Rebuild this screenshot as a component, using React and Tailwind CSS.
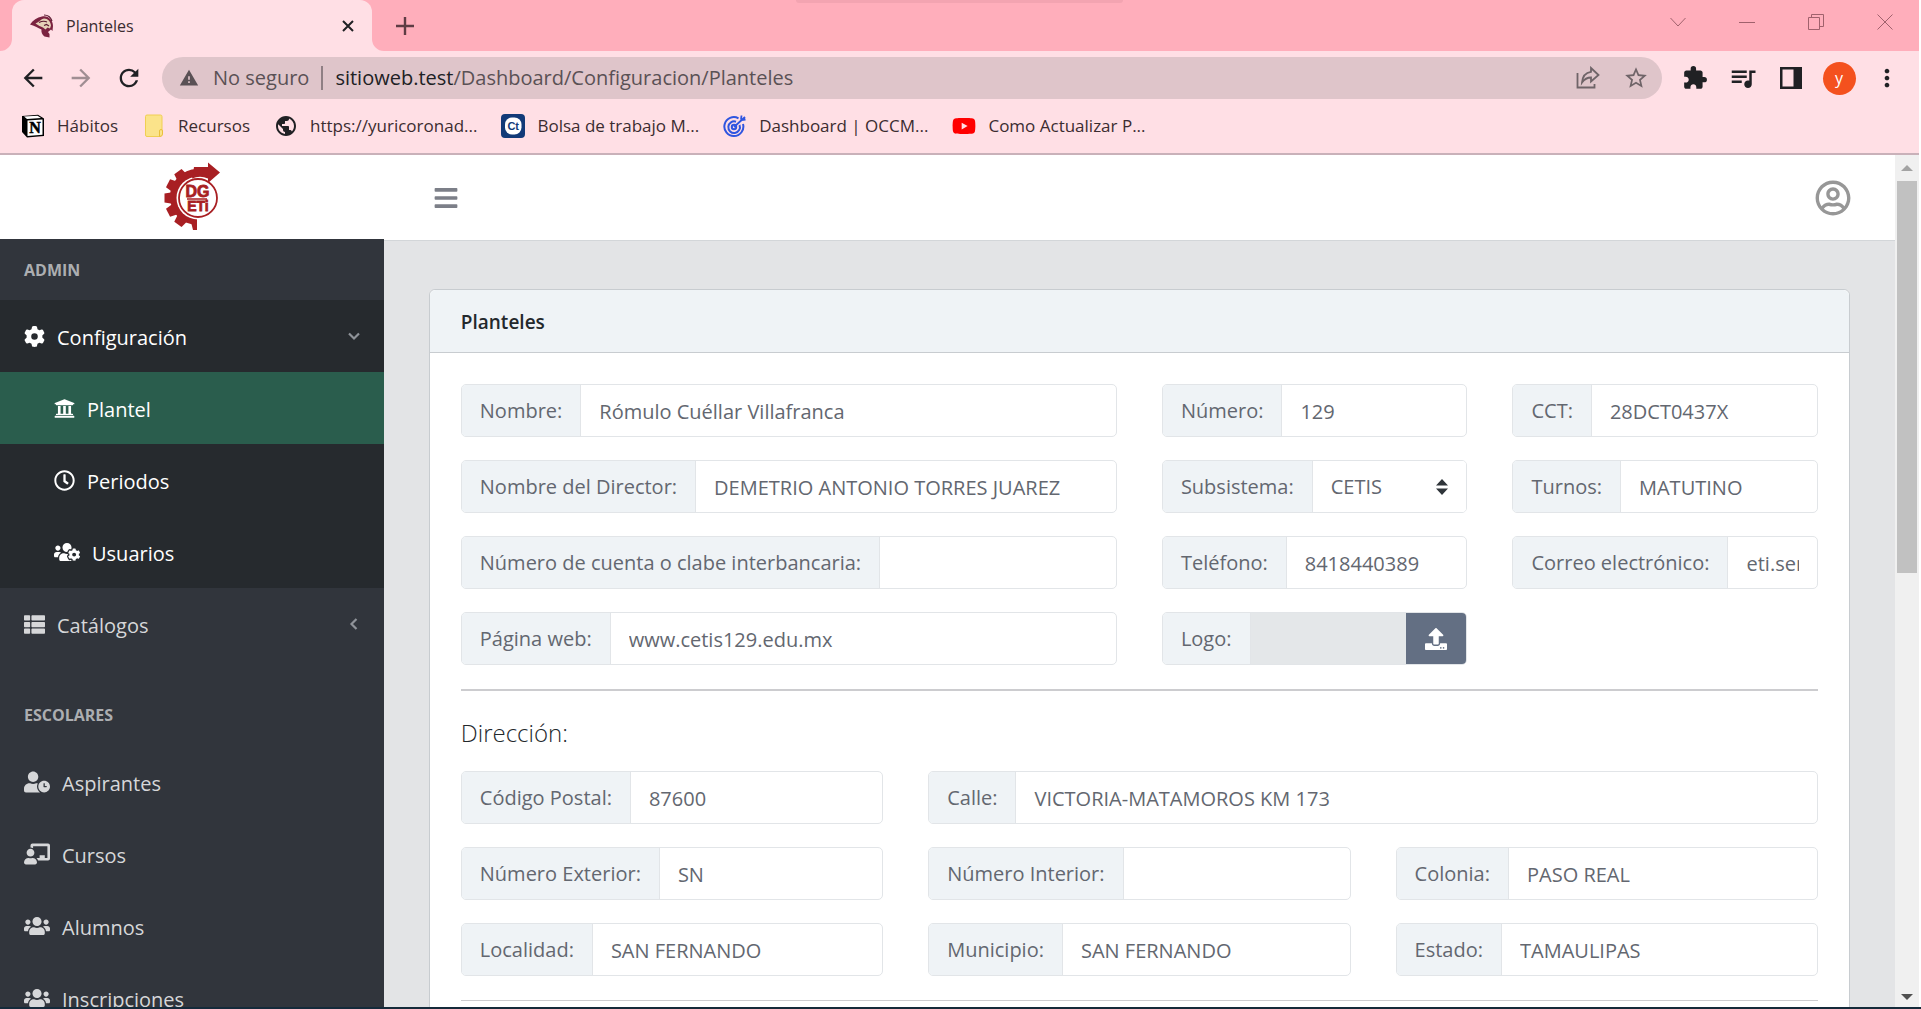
import React from "react";
import {
  FaThList,
  FaUniversity,
  FaRegClock,
  FaUsersCog,
  FaUserClock,
  FaChalkboardTeacher,
  FaUsers,
  FaUpload,
  FaRegUserCircle,
  FaBars,
  FaYoutube,
} from "react-icons/fa";
import { FaGear } from "react-icons/fa6";
import {
  MdArrowBack,
  MdArrowForward,
  MdRefresh,
  MdWarning,
  MdExtension,
  MdQueueMusic,
  MdMoreVert,
  MdStarBorder,
  MdPublic,
} from "react-icons/md";

const EagleIcon = () => (
  <svg viewBox="0 0 24 24" className="size-6">
    <path d="M0 10.500C3 6 7 3.500 12 2.500 18 1 23 6 23 12l-.5 5-1.500-1.500L18 18l1.500 2v3.500l-5-1C12 20.500 11 18 11.500 15.500 8 14 4 11.500 0 10.500Z" fill="#7b2340" />
    <path d="M5.500 9.500C9 8 11 5 14 4.500c4 0 6.500 3 7 7l-1 3-2.500-1-2 2-2.500-2L9.500 12Z" fill="#e6d3b8" />
    <path d="M9 8.500c3-1.500 5-2 8-.5M14 11.500l2.500-1 2.500 1.500M14 1c4 0 7 3 8 6" stroke="#5b1a30" strokeWidth="1.200" fill="none" />
  </svg>
);

const DgetiLogo = () => (
  <svg viewBox="13 8 58 70" className="h-[70px] w-[58px]">
    <g fill="#a81f23">
      <path d="M47 15V71A27 28 0 0 1 47 15Z" />
      {[0, 27, 54, -27, -54].map((a) => (
        <path key={a} d="M14.500 39.500 24 38v12l-9.500-1.500Z" transform={`rotate(${a} 47 44)`} />
      ))}
      <path d="M41 68h6v8h-4Z" />
    </g>
    <circle cx="48" cy="44" r="21.500" fill="#fff" />
    <path d="M44 13h14V8.500L70 18.500 58 29v-4.500q-8-3.500-16 0Z" fill="#a81f23" />
    <circle cx="48" cy="44" r="19" fill="#fff" stroke="#a81f23" strokeWidth="1.800" />
    <g fill="#a81f23" fontFamily="Liberation Sans, sans-serif" fontWeight="700" fontSize="16" textAnchor="middle" stroke="#a81f23" strokeWidth="0.800">
      <text x="47.500" y="43">DG</text>
      <text x="48" y="57" fontSize="14">ETi</text>
    </g>
    <path d="M37 45h20" stroke="#a81f23" strokeWidth="1.500" />
  </svg>
);

const NotionIcon = () => (
  <svg viewBox="0 0 24 24" className="size-6">
    <path d="M1 2 17 .8 23 4.500V22l-17 1.500L1 18Z" fill="#000" />
    <path d="M3 2.600 16.500 1.800 20 4 6 5Z" fill="#fff" />
    <path d="M6.500 6.600 21.500 5.600V20.800L6.500 22Z" fill="#fff" />
    <text x="14" y="19.200" fontFamily="Liberation Serif, serif" fontWeight="700" fontSize="16" textAnchor="middle" stroke="#000" strokeWidth="0.500">N</text>
  </svg>
);

const FolderIcon = () => (
  <svg viewBox="0 0 24 24" className="size-6">
    <path d="M3.500 2.500q0-1.500 1.500-1.500h13.500q1.500 0 1.500 1.500V20q0 2.500-2 2.500H5q-1.500 0-1.500-1.500Z" fill="#fbe38a" stroke="#f0cf52" />
    <path d="M17.500 22v-5q0-1.500 1.500-1.500t1.500 1.500v3q0 2.500-3 2.500Z" fill="#fbe38a" stroke="#eac03c" />
  </svg>
);

const CtIcon = () => (
  <svg viewBox="0 0 24 24" className="size-6">
    <rect width="24" height="24" rx="4" fill="#123a78" />
    <rect x="4" y="3.500" width="16.500" height="17" rx="7" fill="#fff" />
    <text x="12.200" y="16" fontFamily="Liberation Sans, sans-serif" fontSize="11" fontWeight="700" fill="#123a78" textAnchor="middle">Ct</text>
  </svg>
);

const TargetIcon = () => (
  <svg viewBox="0 0 24 24" className="size-6" fill="none" stroke="#2f55e0" strokeWidth="2">
    <path d="M15.500 4.300A9.500 9.500 0 1 0 20 10" />
    <path d="M13 7.700a5.800 5.800 0 1 0 3.500 3.300" />
    <circle cx="11" cy="13" r="2.200" />
    <path d="M11 13 22 3M18 5.500l.5-4M18.500 6l4-.5" strokeWidth="1.800" />
  </svg>
);

const BOOKMARKS = [
  { label: "Hábitos", icon: <NotionIcon /> },
  { label: "Recursos", icon: <FolderIcon /> },
  { label: "https://yuricoronad...", icon: <MdPublic className="size-6 text-[#202124]" /> },
  { label: "Bolsa de trabajo M...", icon: <CtIcon /> },
  { label: "Dashboard | OCCM...", icon: <TargetIcon /> },
  { label: "Como Actualizar P...", icon: <FaYoutube className="size-6 text-[#ff0000]" /> },
];

function WindowButton({ label, children }) {
  return (
    <button aria-label={label} className="flex h-11 w-[69px] items-center justify-center">
      <svg viewBox="0 0 16 16" className="size-4" fill="none" stroke="#a0616c" strokeWidth="1">
        {children}
      </svg>
    </button>
  );
}

function TabStrip() {
  return (
    <div className="relative flex h-[51px] bg-[#ffaebb] pl-3">
      <div className="absolute left-[41.5%] top-0 h-[3px] w-[17%] rounded-b-lg bg-[#f3a4b1]" />
      <div className="relative flex w-[360px] items-center rounded-t-xl bg-[#ffdfe5] pl-[18px] pr-3">
        <svg viewBox="0 0 12 12" className="absolute -left-3 bottom-0 size-3">
          <path d="M12 0v12H0A12 12 0 0 0 12 0Z" fill="#ffdfe5" />
        </svg>
        <svg viewBox="0 0 12 12" className="absolute -right-3 bottom-0 size-3">
          <path d="M0 0v12h12A12 12 0 0 1 0 0Z" fill="#ffdfe5" />
        </svg>
        <EagleIcon />
        <span className="ml-3 flex-1 text-base text-[#3b2c30]">Planteles</span>
        <button aria-label="Cerrar pestaña" className="flex size-6 items-center justify-center">
          <svg viewBox="0 0 12 12" className="size-3" stroke="#202124" strokeWidth="2">
            <path d="M1 1l10 10M11 1 1 11" />
          </svg>
        </button>
      </div>
      <button aria-label="Nueva pestaña" className="ml-6 flex w-[18px] items-center justify-center">
        <svg viewBox="0 0 18 18" className="size-[18px]" stroke="#5f3c44" strokeWidth="2.400">
          <path d="M9 0v18M0 9h18" />
        </svg>
      </button>
      <div className="ml-auto flex">
        <WindowButton label="Buscar pestañas"><path d="M.5 4 8 12l7.500-8" /></WindowButton>
        <WindowButton label="Minimizar"><path d="M0 8.500h16" /></WindowButton>
        <WindowButton label="Restaurar"><path d="M.5 3.500h11v12H.5ZM3.500 3.500v-3h12v12h-4" /></WindowButton>
        <WindowButton label="Cerrar"><path d="M.5.5l15 15M15.500.5l-15 15" /></WindowButton>
      </div>
    </div>
  );
}

function ToolButton({ label, children }) {
  return (
    <button aria-label={label} className="flex w-12 items-center justify-center text-[#202124]">
      {children}
    </button>
  );
}

function Toolbar() {
  return (
    <div className="flex h-[54px] items-center bg-[#ffdfe5] pl-[9px] pr-2">
      <ToolButton label="Atrás"><MdArrowBack className="size-7" /></ToolButton>
      <ToolButton label="Adelante"><MdArrowForward className="size-7 text-[#a08e93]" /></ToolButton>
      <ToolButton label="Recargar"><MdRefresh className="size-7" /></ToolButton>
      <div className="mx-[9px] flex h-[42px] flex-1 items-center rounded-full bg-[#dfc5ca] pl-[17px] pr-2.5 text-xl text-[#5a5155]">
        <MdWarning className="size-5 shrink-0" />
        <span className="ml-3.5">No seguro</span>
        <span className="mx-3 h-6 w-0.5 bg-[#8f7f84]" />
        <div role="textbox" aria-label="Dirección web" className="flex-1">
          <span className="text-[#202124]">sitioweb.test</span>/Dashboard/Configuracion/Planteles
        </div>
        <button aria-label="Compartir" className="flex w-12 justify-center">
          <svg viewBox="0 0 24 24" className="size-6" fill="none" stroke="#6f6468" strokeWidth="1.800">
            <path d="M1.500 7v14.500h17V18" />
            <path d="M15 2l7.500 7L15 15.500v-4c-4 0-6.500 1.500-9 5C6.500 10.500 10 6.500 15 5.800Z" />
          </svg>
        </button>
        <button aria-label="Marcador" className="-mr-2 flex w-12 justify-center">
          <MdStarBorder className="size-[26px] text-[#6f6468]" />
        </button>
      </div>
      <ToolButton label="Extensiones"><MdExtension className="size-[26px]" /></ToolButton>
      <ToolButton label="Multimedia"><MdQueueMusic className="size-[30px]" /></ToolButton>
      <ToolButton label="Panel lateral">
        <svg viewBox="0 0 22 22" className="size-[22px]" fill="none" stroke="#202124">
          <rect x="1.250" y="1.250" width="19.500" height="19.500" strokeWidth="2.500" />
          <path d="M17 1v20" strokeWidth="7" />
        </svg>
      </ToolButton>
      <ToolButton label="Perfil">
        <span className="flex size-[33px] items-center justify-center rounded-full bg-[#f4511e] text-base leading-none text-white">y</span>
      </ToolButton>
      <ToolButton label="Menú"><MdMoreVert className="size-7" /></ToolButton>
    </div>
  );
}

function BookmarksBar() {
  return (
    <div className="flex h-[50px] items-center gap-6 border-b-2 border-[#c9b1b9] bg-[#ffdfe5] pb-1.5 pl-[21px]">
      {BOOKMARKS.map((b) => (
        <a key={b.label} href="#" className="flex items-center gap-3 whitespace-nowrap text-[17px] text-[#3b2c30]">
          {b.icon}
          {b.label}
        </a>
      ))}
    </div>
  );
}

const Chevron = ({ open }) => (
  <svg viewBox="0 0 12 12" className="ml-auto mr-6 size-3" fill="none" stroke="#8f9399" strokeWidth="2.200">
    <path d={open ? "M1 3.500l5 5 5-5" : "M8.500 1l-5 5 5 5"} />
  </svg>
);

function NavItem({ icon: Icon, label, wide, sub, active, bright, open }) {
  return (
    <a
      href="#"
      className={`flex h-[72px] shrink-0 items-center text-xl ${sub ? "pl-[54px]" : "pl-6"} ${
        active ? "bg-[#2a5d4d]" : bright ? "bg-[#262a2e]" : ""
      } ${bright ? "text-white" : "text-[#d6d7d9]"}`}
    >
      <Icon className={wide ? "h-[22px] w-[26px]" : "size-[21px]"} />
      <span className="ml-3 pt-1">{label}</span>
      {open !== undefined && <Chevron open={open} />}
    </a>
  );
}

function Sidebar() {
  return (
    <nav className="flex flex-1 flex-col overflow-hidden bg-[#31353c]">
      <h2 className="flex h-[61px] shrink-0 items-center pl-6 text-base font-bold text-[#acaeb1]">ADMIN</h2>
      <NavItem icon={FaGear} label="Configuración" bright open={true} />
      <NavItem icon={FaUniversity} label="Plantel" sub bright active />
      <NavItem icon={FaRegClock} label="Periodos" sub bright />
      <NavItem icon={FaUsersCog} label="Usuarios" sub bright wide />
      <NavItem icon={FaThList} label="Catálogos" open={false} />
      <h2 className="flex h-[86px] shrink-0 items-center pl-6 pt-6 text-base font-bold text-[#acaeb1]">ESCOLARES</h2>
      <NavItem icon={FaUserClock} label="Aspirantes" wide />
      <NavItem icon={FaChalkboardTeacher} label="Cursos" wide />
      <NavItem icon={FaUsers} label="Alumnos" wide />
      <NavItem icon={FaUsers} label="Inscripciones" wide />
    </nav>
  );
}

function FieldShell({ id, label, className, children }) {
  return (
    <div className={`flex h-[53px] overflow-hidden rounded-[5px] border border-[#e2e5e8] bg-white text-xl text-[#636770] ${className}`}>
      <label htmlFor={id} className="flex shrink-0 items-center whitespace-nowrap border-r border-[#e2e5e8] bg-[#eff3f6] px-[18px]">
        {label}
      </label>
      {children}
    </div>
  );
}

function Field({ id, label, value, className }) {
  return (
    <FieldShell id={id} label={label} className={className}>
      <input id={id} type="text" defaultValue={value} className="min-w-0 flex-1 px-[18px] pt-0.5 outline-none" />
    </FieldShell>
  );
}

function PlantelCard() {
  return (
    <section className="rounded-md border border-[#c8ccd0] bg-white">
      <h1 className="flex h-[63px] items-center rounded-t-md border-b border-[#c8ccd0] bg-[#eff3f6] px-[31px] pt-0.5 text-[19px] font-semibold text-[#23282c]">
        Planteles
      </h1>
      <div className="px-[31px] pt-[31px]">
        <div className="grid grid-cols-12 gap-x-[45px] gap-y-[23px]">
          <Field id="nombre" label="Nombre:" value="Rómulo Cuéllar Villafranca" className="col-span-6" />
          <Field id="numero" label="Número:" value="129" className="col-span-3" />
          <Field id="cct" label="CCT:" value="28DCT0437X" className="col-span-3" />
          <Field id="director" label="Nombre del Director:" value="DEMETRIO ANTONIO TORRES JUAREZ" className="col-span-6" />
          <FieldShell id="subsistema" label="Subsistema:" className="col-span-3">
            <div className="relative flex min-w-0 flex-1">
              <select id="subsistema" className="w-full appearance-none bg-white px-[18px] outline-none">
                <option>CETIS</option>
              </select>
              <svg viewBox="0 0 12 16" className="pointer-events-none absolute right-[18px] top-1/2 h-4 w-3 -translate-y-1/2" fill="#2f353a">
                <path d="M0 6.500 6 0l6 6.500ZM0 9.500 6 16l6-6.500Z" />
              </svg>
            </div>
          </FieldShell>
          <Field id="turnos" label="Turnos:" value="MATUTINO" className="col-span-3" />
          <Field id="cuenta" label="Número de cuenta o clabe interbancaria:" value="" className="col-span-6" />
          <Field id="telefono" label="Teléfono:" value="8418440389" className="col-span-3" />
          <Field id="correo" label="Correo electrónico:" value="eti.sen" className="col-span-3" />
          <Field id="web" label="Página web:" value="www.cetis129.edu.mx" className="col-span-6" />
          <FieldShell id="logo" label="Logo:" className="col-span-3">
            <input id="logo" type="text" disabled className="min-w-0 flex-1 bg-[#e4e7e9]" />
            <button aria-label="Subir logo" className="flex w-[60px] items-center justify-center bg-[#636f83] text-white">
              <FaUpload className="size-[22px]" />
            </button>
          </FieldShell>
        </div>
        <hr className="mt-6 border-t-2 border-[#cccccf]" />
        <h2 className="mt-6 text-2xl font-light leading-9 text-[#23282c]">Dirección:</h2>
        <div className="mt-5 grid grid-cols-12 gap-x-[45px] gap-y-[23px]">
          <Field id="cp" label="Código Postal:" value="87600" className="col-span-4" />
          <Field id="calle" label="Calle:" value="VICTORIA-MATAMOROS KM 173" className="col-span-8" />
          <Field id="exterior" label="Número Exterior:" value="SN" className="col-span-4" />
          <Field id="interior" label="Número Interior:" value="" className="col-span-4" />
          <Field id="colonia" label="Colonia:" value="PASO REAL" className="col-span-4" />
          <Field id="localidad" label="Localidad:" value="SAN FERNANDO" className="col-span-4" />
          <Field id="municipio" label="Municipio:" value="SAN FERNANDO" className="col-span-4" />
          <Field id="estado" label="Estado:" value="TAMAULIPAS" className="col-span-4" />
        </div>
        <hr className="mt-6 border-[#cccccf]" />
        <div className="h-24" />
      </div>
    </section>
  );
}

function PageScrollbar() {
  return (
    <div className="flex w-6 shrink-0 flex-col items-center bg-[#f0f0f0]">
      <svg viewBox="0 0 12 6" className="my-[10px] h-[6px] w-3 shrink-0" fill="#a3a3a3">
        <path d="M0 6 6 0l6 6Z" />
      </svg>
      <div className="h-[46%] w-5 bg-[#c1c1c1]" />
      <svg viewBox="0 0 12 6" className="mb-[7px] mt-auto h-[6px] w-3" fill="#505050">
        <path d="M0 0h12L6 6Z" />
      </svg>
    </div>
  );
}

export default function App() {
  return (
    <div className="flex h-screen flex-col overflow-hidden border-b-2 border-[#152a3a] bg-white pr-0.5 font-['Open_Sans','Noto_Sans',sans-serif]">
      <header>
        <TabStrip />
        <Toolbar />
        <BookmarksBar />
      </header>
      <div className="flex min-h-0 flex-1">
        <aside className="flex w-1/5 shrink-0 flex-col">
          <div className="flex h-[84px] shrink-0 items-center justify-center bg-white">
            <DgetiLogo />
          </div>
          <Sidebar />
        </aside>
        <div className="flex min-w-0 flex-1 flex-col">
          <div className="flex h-[86px] shrink-0 items-center justify-between border-b border-[#d3d6d9] bg-white pl-[49px] pr-11">
            <button aria-label="Menú lateral">
              <FaBars className="size-[26px] text-[#7c7f88]" />
            </button>
            <button aria-label="Cuenta">
              <FaRegUserCircle className="size-9 text-[#979797]" />
            </button>
          </div>
          <main className="min-h-0 flex-1 overflow-hidden bg-[#e3e4e6] px-[45px] pt-12">
            <PlantelCard />
          </main>
        </div>
        <PageScrollbar />
      </div>
    </div>
  );
}
